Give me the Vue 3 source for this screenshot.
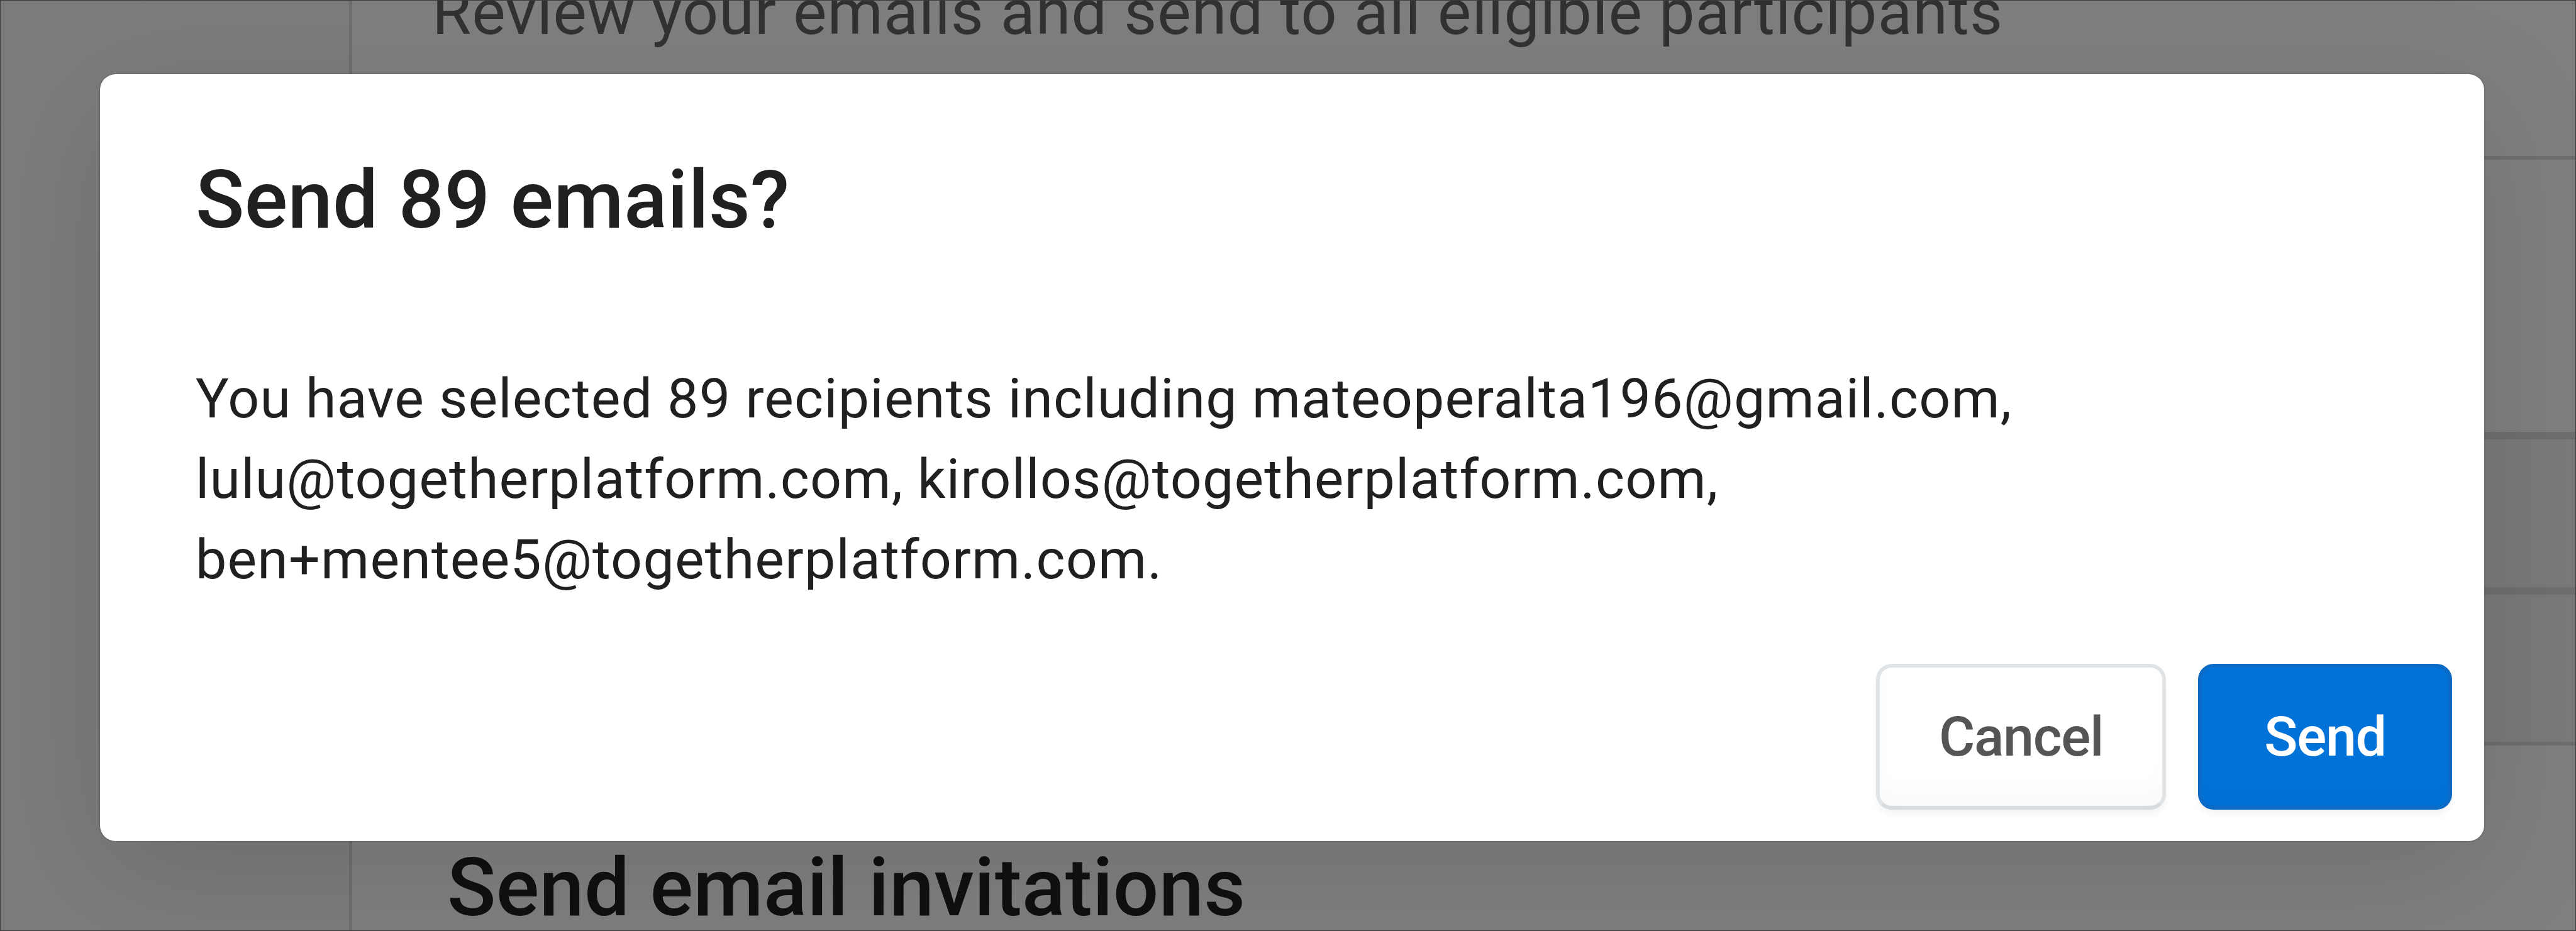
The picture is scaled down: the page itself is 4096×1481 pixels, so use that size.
<template>
  <div class="page">
    <aside class="sidebar"></aside>
    <main class="content">
      <header class="content-header">
        <p class="subtitle">Review your emails and send to all eligible participants</p>
      </header>
      <section class="panel"></section>
      <section class="row"></section>
      <section class="row row-last"></section>
      <section class="invitations">
        <h2 class="section-title">Send email invitations</h2>
      </section>
    </main>

    <div class="backdrop">
      <div class="dialog" role="dialog" aria-modal="true">
        <h2 class="dialog-title">Send {{ count }} emails?</h2>
        <p class="dialog-text">
          You have selected {{ count }} recipients including {{ recipients.join(', ') }}.
        </p>
        <div class="dialog-actions">
          <button class="btn">Cancel</button>
          <button class="btn btn-primary">Send</button>
        </div>
      </div>
    </div>
  </div>
</template>

<script setup>
import { ref } from 'vue'

const count = ref(89)
const recipients = ref([
  'mateoperalta196@gmail.com',
  'lulu@togetherplatform.com',
  'kirollos@togetherplatform.com',
  'ben+mentee5@togetherplatform.com'
])
</script>

<style>
body {
  margin: 0;
  overflow: hidden;
}
</style>

<style scoped>
.page {
  position: relative;
  display: flex;
  width: 4096px;
  height: 1481px;
  overflow: hidden;
  background: #ffffff;
  font-family: Roboto, sans-serif;
}

.sidebar {
  box-sizing: border-box;
  width: 560px;
  flex-shrink: 0;
  background: #f8f8f8;
  border-right: 5px solid #dcdcdc;
}

.content {
  flex: 1;
  display: flex;
  flex-direction: column;
  min-width: 0;
}

.content-header {
  box-sizing: border-box;
  height: 254px;
  flex-shrink: 0;
  padding-left: 127px;
  border-bottom: 6px solid #dcdcdc;
}

.subtitle {
  margin: -44px 0 0;
  font-size: 101px;
  line-height: 128px;
  letter-spacing: 0.93px;
  color: #646464;
  white-space: nowrap;
}

.panel {
  box-sizing: border-box;
  height: 445px;
  flex-shrink: 0;
  border-bottom: 12px solid #dcdcdc;
}

.row {
  box-sizing: border-box;
  height: 247px;
  flex-shrink: 0;
  background: #f5f5f5;
  border-bottom: 12px solid #dcdcdc;
}

.row-last {
  height: 240px;
  border-bottom-width: 6px;
}

.invitations {
  padding: 141px 0 0 151px;
}

.section-title {
  margin: 0;
  font-size: 128px;
  font-weight: 500;
  line-height: 170px;
  letter-spacing: 0.24px;
  color: #202020;
  white-space: nowrap;
}

.backdrop {
  position: absolute;
  inset: 0;
  box-sizing: border-box;
  padding: 117px 145px 0 158px;
  border: 1px solid #3c3c3c;
  background: rgba(0, 0, 0, 0.5);
}

.dialog {
  box-sizing: border-box;
  display: flex;
  flex-direction: column;
  height: 1220px;
  padding: 0 51px 50px 152px;
  background: #ffffff;
  border-radius: 25px;
  box-shadow:
    0 0 0 2px rgba(0, 0, 0, 0.08),
    0 50px 200px rgba(0, 0, 0, 0.12);
}

.dialog-title {
  margin: 115px 0 0;
  font-size: 128px;
  font-weight: 500;
  line-height: 170px;
  letter-spacing: 0.24px;
  color: #202020;
}

.dialog-text {
  margin: 167px 0 0;
  width: 3100px;
  font-size: 88px;
  line-height: 128px;
  letter-spacing: 1.12px;
  color: #202020;
}

.dialog-actions {
  display: flex;
  justify-content: flex-end;
  gap: 51px;
  margin-top: auto;
}

.btn {
  box-sizing: border-box;
  width: 461px;
  height: 232px;
  padding: 0;
  border: 6px solid #e0e4e6;
  border-bottom-color: #d6dce0;
  border-radius: 25px;
  background: #ffffff;
  box-shadow:
    inset 0 -30px 40px -10px rgba(0, 0, 0, 0.025),
    0 8px 10px rgba(0, 0, 0, 0.04);
  font-family: inherit;
  font-size: 88px;
  font-weight: 500;
  line-height: 128px;
  letter-spacing: -1.4px;
  color: #555555;
}

.btn-primary {
  width: 404px;
  border-color: #0b6bc6;
  background: #0072d8;
  color: #ffffff;
}
</style>
